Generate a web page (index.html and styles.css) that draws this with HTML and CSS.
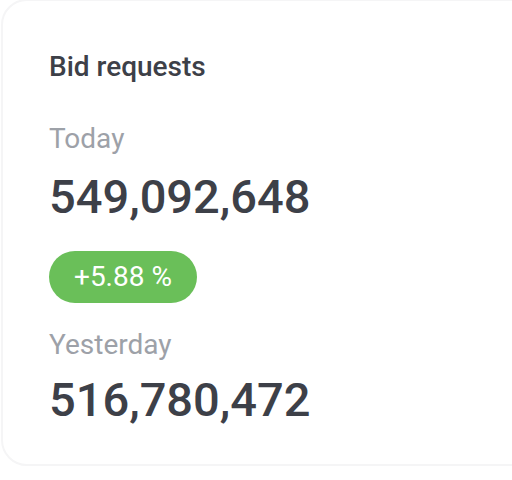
FILE: index.html
```html
<!DOCTYPE html>
<html>
<head>
<meta charset="utf-8">
<link rel="stylesheet" href="styles.css">
</head>
<body>
<div class="card">
  <h2 class="title">Bid requests</h2>
  <div class="label label-today">Today</div>
  <div class="value value-today">549,092,648</div>
  <div class="badge">+5.88 %</div>
  <div class="label label-yesterday">Yesterday</div>
  <div class="value value-yesterday">516,780,472</div>
</div>
</body>
</html>
```
FILE: styles.css
```css
html, body {
  margin: 0;
  padding: 0;
  background: #ffffff;
}
body {
  font-family: Roboto, "Noto Sans", sans-serif;
  width: 512px;
  height: 480px;
  overflow: hidden;
}
.card {
  box-sizing: border-box;
  width: 540px;
  height: 467px;
  margin-left: 1px;
  margin-top: -1px;
  border: 2px solid #f5f5f6;
  border-radius: 26px;
  padding: 48px 0 0 46px;
  display: flex;
  flex-direction: column;
  align-items: flex-start;
}
.title {
  margin: 0;
  font-size: 28px;
  line-height: 36px;
  font-weight: 500;
  color: #3d4048;
}
.label {
  font-size: 28px;
  line-height: 36px;
  color: #9da1a8;
  font-weight: 400;
}
.label-today {
  margin-top: 36px;
}
.label-yesterday {
  margin-top: 24px;
}
.value {
  font-size: 47px;
  line-height: 56px;
  font-weight: 500;
  color: #3d4048;
}
.value-today {
  margin-top: 12px;
}
.value-yesterday {
  margin-top: 9px;
}
.badge {
  margin-top: 26px;
  height: 52px;
  line-height: 52px;
  padding: 0 25px;
  border-radius: 26px;
  background: #6abf59;
  color: #ffffff;
  font-size: 28px;
  font-weight: 400;
}
```
